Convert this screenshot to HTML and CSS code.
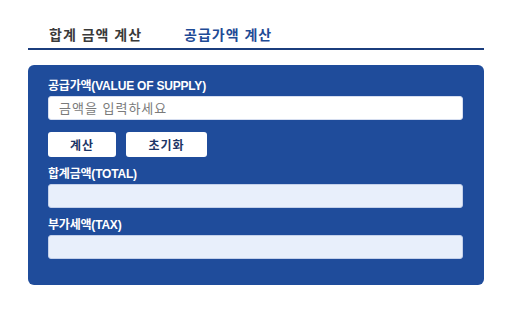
FILE: index.html
```html
<!DOCTYPE html>
<html lang="ko">
<head>
<meta charset="utf-8">
<link rel="stylesheet" href="styles.css">
</head>
<body>
<div class="wrap">
  <div class="tabs">
    <div class="tab">합계 금액 계산</div>
    <div class="tab active">공급가액 계산</div>
  </div>
  <div class="panel">
    <div class="label">공급가액(VALUE OF SUPPLY)</div>
    <input class="field" type="text" placeholder="금액을 입력하세요">
    <div class="buttons">
      <button class="btn btn-calc">계산</button>
      <button class="btn btn-reset">초기화</button>
    </div>
    <div class="label gap">합계금액(TOTAL)</div>
    <input class="field result" type="text" readonly>
    <div class="label gap">부가세액(TAX)</div>
    <input class="field result" type="text" readonly>
  </div>
</div>
</body>
</html>
```
FILE: styles.css
```css
* { box-sizing: border-box; }
html, body { margin: 0; padding: 0; background: #fff; }
body {
  font-family: "Liberation Sans", "Noto Sans CJK KR", sans-serif;
  width: 512px;
  height: 320px;
  overflow: hidden;
}
.wrap {
  padding: 20px 28px 0 28px;
}
.tabs {
  display: flex;
  gap: 42px;
  padding-left: 21px;
  border-bottom: 2px solid #1b3d7d;
}
.tab {
  font-size: 14px;
  line-height: 20px;
  font-weight: bold;
  letter-spacing: 1px;
  padding: 5px 0 3px;
  color: #3a3a3a;
}
.tab.active {
  color: #1f4b96;
}
.panel {
  margin-top: 15px;
  background: #1f4c9b;
  border-radius: 6px;
  padding: 14px 21px 26px 20px;
  display: flex;
  flex-direction: column;
}
.label {
  font-size: 12px;
  line-height: 15px;
  font-weight: bold;
  letter-spacing: -0.2px;
  color: #fff;
  margin-bottom: 2px;
}
.label.gap {
  margin-top: 10px;
}
.field {
  display: block;
  width: 100%;
  height: 24px;
  border: 1px solid #d6def0;
  border-radius: 3px;
  background: #fff;
  font-family: inherit;
  font-size: 13px;
  padding: 0 10px;
  color: #333;
  outline: none;
}
.field::placeholder {
  color: #7a7a7a;
  letter-spacing: 1px;
}
.field.result {
  background: #e8effb;
  border: 1px solid #c3d0ea;
}
.buttons {
  display: flex;
  gap: 10px;
  margin-top: 12px;
}
.btn {
  height: 25px;
  border: none;
  border-radius: 3px;
  background: #fff;
  color: #1c3566;
  font-family: inherit;
  font-size: 12px;
  font-weight: bold;
  letter-spacing: 1px;
  padding: 0;
}
.btn-calc { width: 68px; }
.btn-reset { width: 81px; }
```
